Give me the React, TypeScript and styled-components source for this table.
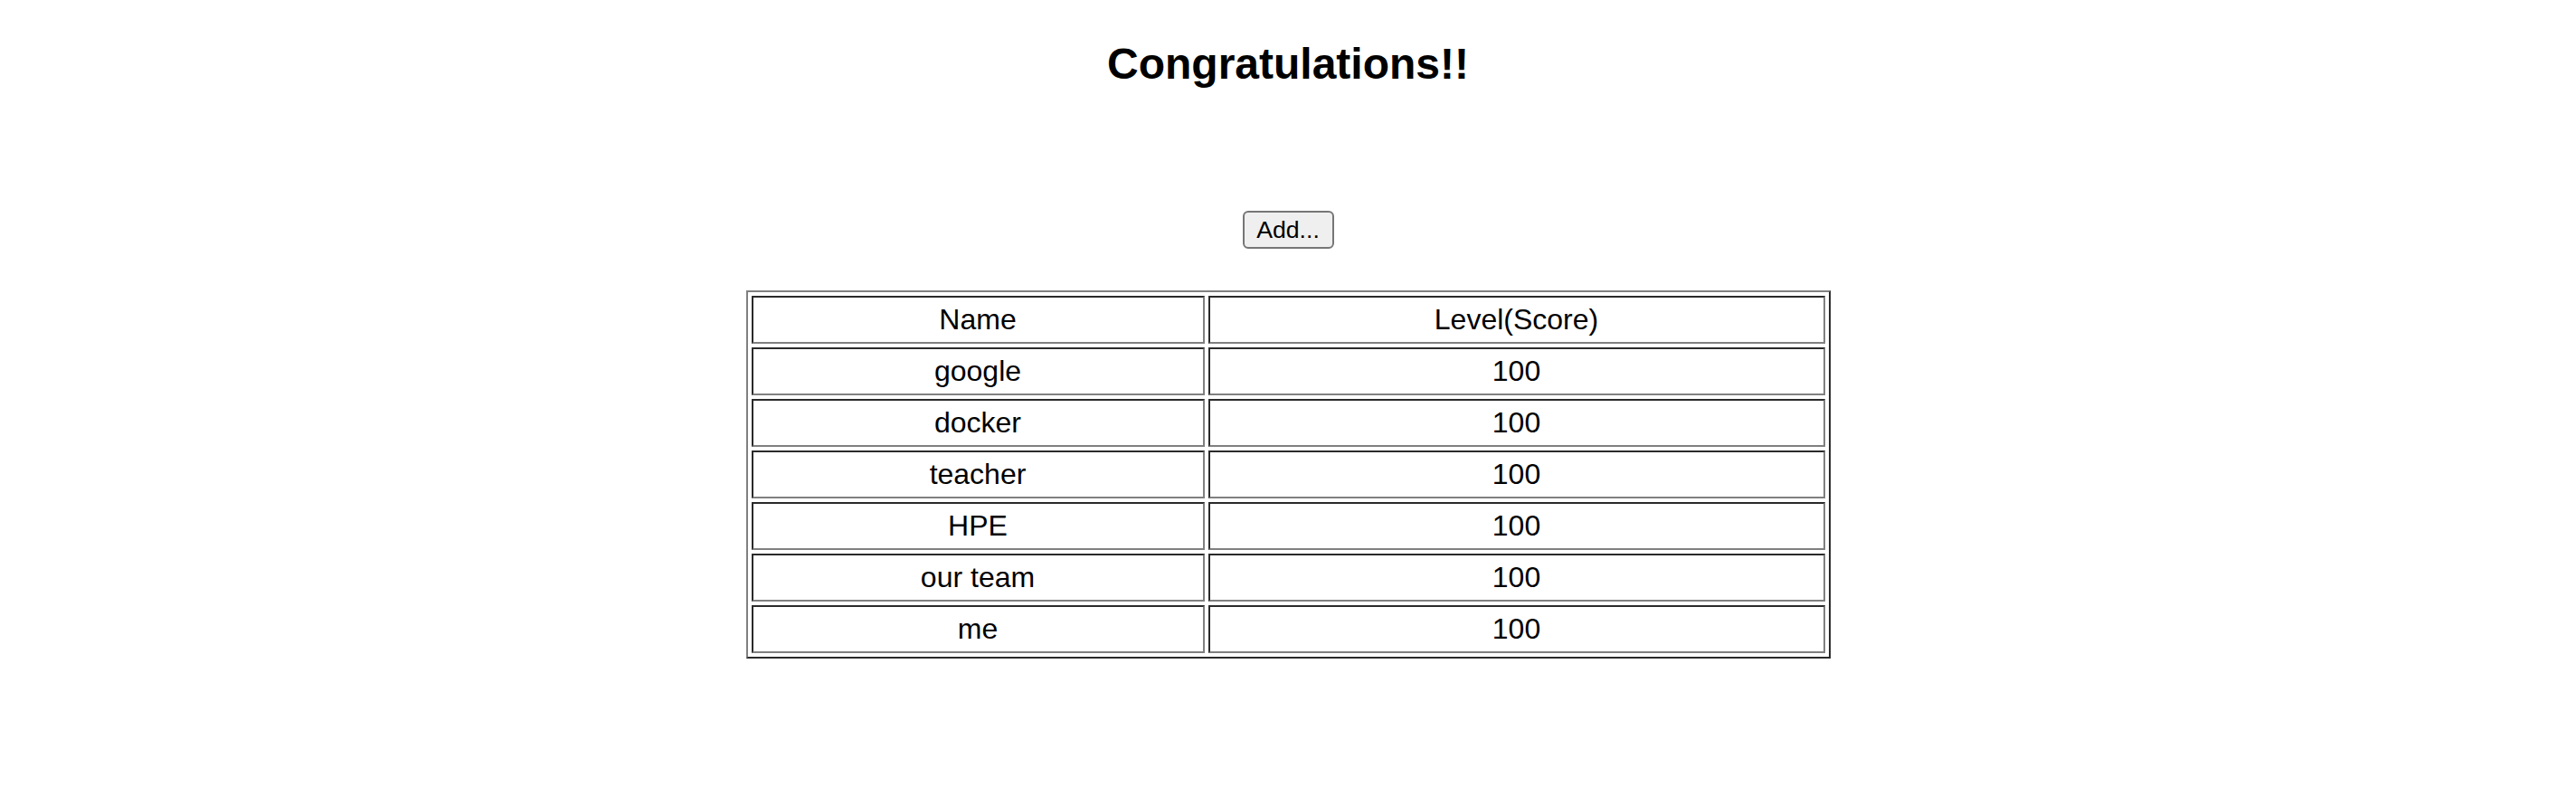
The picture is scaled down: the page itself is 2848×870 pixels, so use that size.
import React from "react";
import styled, { createGlobalStyle } from "styled-components";

const GlobalStyle = createGlobalStyle`
  html, body {
    margin: 0;
    padding: 0;
    background: #ffffff;
    color: #000000;
    font-family: "Liberation Sans", Arial, Helvetica, sans-serif;
  }
`;

const Page = styled.main`
  display: flex;
  flex-direction: column;
  align-items: center;
  padding-top: 44px;
`;

const Title = styled.h2`
  margin: 0;
  font-size: 48px;
  line-height: 54px;
  font-weight: 700;
`;

const AddButton = styled.button`
  margin-top: 135px;
  width: 101px;
  height: 42px;
  padding: 0;
  font-family: "Liberation Sans", Arial, sans-serif;
  font-size: 26.67px;
  color: #000000;
  background: #efefef;
  border: 2px solid #767676;
  border-radius: 6px;
  cursor: pointer;
`;

const ScoreTable = styled.table`
  margin-top: 46px;
  width: 1199px;
  table-layout: fixed;
  border-collapse: separate;
  border-spacing: 4px;
  border-style: solid;
  border-width: 2px;
  border-color: #808080 #2a2a2a #2a2a2a #808080;
`;

const Cell = styled.td<{ $first?: boolean; $head?: boolean }>`
  box-sizing: border-box;
  height: 53px;
  width: ${(p) => (p.$first ? "501px" : "auto")};
  padding: 0 2px;
  text-align: center;
  vertical-align: middle;
  font-size: 32px;
  font-weight: 400;
  border-style: solid;
  border-width: 2px;
  border-color: #2a2a2a #808080 #808080 #2a2a2a;
`;

const rows = [
  { name: "google", score: 100 },
  { name: "docker", score: 100 },
  { name: "teacher", score: 100 },
  { name: "HPE", score: 100 },
  { name: "our team", score: 100 },
  { name: "me", score: 100 },
];

export default function App() {
  return (
    <>
      <GlobalStyle />
      <Page>
        <Title>Congratulations!!</Title>
        <AddButton type="button">Add...</AddButton>
        <ScoreTable>
          <thead>
            <tr>
              <Cell as="th" $first $head>
                Name
              </Cell>
              <Cell as="th" $head>
                Level(Score)
              </Cell>
            </tr>
          </thead>
          <tbody>
            {rows.map((r) => (
              <tr key={r.name}>
                <Cell $first>{r.name}</Cell>
                <Cell>{r.score}</Cell>
              </tr>
            ))}
          </tbody>
        </ScoreTable>
      </Page>
    </>
  );
}
